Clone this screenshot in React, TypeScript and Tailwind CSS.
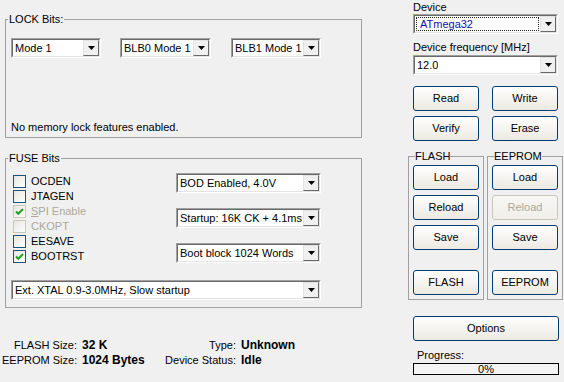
import React from "react";

const font = "font-['Liberation_Sans',Arial,sans-serif] text-[11px] leading-[13px] text-black";

const Arrow = () => (
  <svg width="7" height="4" viewBox="0 0 7 4">
    <path d="M0 0h7L3.5 4z" fill="#000" />
  </svg>
);

const Select = ({
  text,
  className,
  focused,
}: {
  text: string;
  className?: string;
  focused?: boolean;
}) => (
  <div
    className={`h-[20px] border border-t-[#a0a0a0] border-l-[#a0a0a0] border-b-white border-r-white ${className ?? ""}`}
  >
    <div className="h-full flex border border-t-[#696969] border-l-[#696969] border-b-[#e3e3e3] border-r-[#e3e3e3] bg-white">
      <div className="flex-1 flex items-center p-[1px] min-w-0">
        {focused ? (
          <div className="h-full w-full flex items-center pl-[3px] border border-dotted border-[#222] text-[#0e0ea8] whitespace-nowrap">
            {text}
          </div>
        ) : (
          <div className="pl-[1px] whitespace-nowrap overflow-hidden">{text}</div>
        )}
      </div>
      <div className="w-[16px] flex items-center justify-center bg-[#f0f0f0] border border-t-[#e3e3e3] border-l-[#e3e3e3] border-b-[#696969] border-r-[#696969]">
        <Arrow />
      </div>
    </div>
  </div>
);

const Button = ({
  label,
  className,
  disabled,
}: {
  label: string;
  className?: string;
  disabled?: boolean;
}) => (
  <div
    className={`h-[25px] w-[66px] rounded-[3px] border flex items-center justify-center bg-gradient-to-b ${
      disabled
        ? "border-[#c9c7ba] from-[#f7f6f3] to-[#f0efea] text-[#aca899]"
        : "border-[#003c74] from-white to-[#ece9e2]"
    } ${className ?? ""}`}
  >
    {label}
  </div>
);

const Check = ({
  label,
  checked,
  disabled,
  underline,
}: {
  label: string;
  checked?: boolean;
  disabled?: boolean;
  underline?: boolean;
}) => (
  <div className="h-[15px] flex items-start">
    <div
      className={`w-[13px] h-[13px] border flex items-center justify-center bg-gradient-to-br from-[#e5e5e0] to-white ${
        disabled ? "border-[#cac8bb]" : "border-[#1c5180]"
      }`}
    >
      {checked && (
        <svg width="9" height="9" viewBox="0 0 9 9">
          <path d="M1 4.5l2.3 2.3L8 2" stroke="#21a121" strokeWidth="2" fill="none" />
        </svg>
      )}
    </div>
    <span className={`ml-[5px] whitespace-nowrap ${disabled ? "text-[#aca899]" : ""}`}>
      {underline ? (
        <>
          <span className="underline">{label[0]}</span>
          {label.slice(1)}
        </>
      ) : (
        label
      )}
    </span>
  </div>
);

const InfoRow = ({ label, value, w }: { label: string; value: string; w: string }) => (
  <div className="flex h-[15px] items-center whitespace-nowrap">
    <span className={`${w} text-right`}>{label}</span>
    <span className="ml-[5px] font-bold text-[12px]">{value}</span>
  </div>
);

export default function App() {
  return (
    <div className={`w-[564px] h-[382px] bg-[#f0f0f0] flex overflow-hidden ${font}`}>
      {/* left column */}
      <div className="ml-[5px] w-[357px] flex flex-col">
        <fieldset className="mt-[13px] h-[125px] border border-[#a0a0a0] px-[5px]">
          <legend className="ml-[-3px] px-[1px]">LOCK Bits:</legend>
          <div className="mt-[12px] flex">
            <Select text="Mode 1" className="w-[90px]" />
            <Select text="BLB0 Mode 1" className="w-[91px] ml-[19px]" />
            <Select text="BLB1 Mode 1" className="w-[90px] ml-[20px]" />
          </div>
          <div className="mt-[63px]">No memory lock features enabled.</div>
        </fieldset>

        <fieldset className="mt-[14px] h-[156px] border border-[#a0a0a0] px-[5px]">
          <legend className="ml-[-3px] px-[1px]">FUSE Bits</legend>
          <div className="flex">
            <div className="w-[165px] pl-[2px] mt-[10px] flex flex-col">
              <Check label="OCDEN" />
              <Check label="JTAGEN" />
              <Check label="SPI Enable" checked disabled underline />
              <Check label="CKOPT" disabled />
              <Check label="EESAVE" />
              <Check label="BOOTRST" checked />
            </div>
            <div className="mt-[8px] flex flex-col gap-[15px]">
              <Select text="BOD Enabled, 4.0V" className="w-[145px]" />
              <Select text="Startup: 16K CK + 4.1ms" className="w-[145px]" />
              <Select text="Boot block 1024 Words" className="w-[145px]" />
            </div>
          </div>
          <Select text="Ext. XTAL 0.9-3.0MHz, Slow startup" className="w-[310px] mt-[15px]" />
        </fieldset>

        <div className="mt-[30px] flex">
          <div className="ml-[-3px] w-[155px] flex flex-col">
            <InfoRow label="FLASH Size:" value="32 K" w="w-[75px]" />
            <InfoRow label="EEPROM Size:" value="1024 Bytes" w="w-[75px]" />
          </div>
          <div className="flex flex-col">
            <InfoRow label="Type:" value="Unknown" w="w-[79px]" />
            <InfoRow label="Device Status:" value="Idle" w="w-[79px]" />
          </div>
        </div>
      </div>

      {/* right column */}
      <div className="ml-[46px] w-[155px] flex flex-col">
        <div className="ml-[5px] w-[145px] flex flex-col">
          <div className="mt-[1px] h-[13px]">Device</div>
          <Select text="ATmega32" className="w-[145px]" focused />
          <div className="mt-[7px] h-[13px]">Device frequency [MHz]</div>
          <Select text="12.0" className="w-[145px] mt-[1px]" />
          <div className="mt-[11px] flex justify-between">
            <Button label="Read" />
            <Button label="Write" />
          </div>
          <div className="mt-[5px] flex justify-between">
            <Button label="Verify" />
            <Button label="Erase" />
          </div>
        </div>

        <div className="mt-[9px] flex justify-between">
          <fieldset className="w-[76px] h-[150px] border border-[#a0a0a0] px-[4px]">
            <legend className="ml-[2px]">FLASH</legend>
            <div className="flex flex-col gap-[5px] mt-[2px]">
              <Button label="Load" />
              <Button label="Reload" />
              <Button label="Save" />
              <Button label="FLASH" className="mt-[15px]" />
            </div>
          </fieldset>
          <fieldset className="w-[76px] h-[150px] border border-[#a0a0a0] px-[4px]">
            <legend className="ml-[2px]">EEPROM</legend>
            <div className="flex flex-col gap-[5px] mt-[2px]">
              <Button label="Load" />
              <Button label="Reload" disabled />
              <Button label="Save" />
              <Button label="EEPROM" className="mt-[15px]" />
            </div>
          </fieldset>
        </div>

        <div className="ml-[5px] w-[146px] flex flex-col">
          <Button label="Options" className="w-[146px] mt-[16px]" />
          <div className="mt-[8px] pl-[4px] h-[13px]">Progress:</div>
          <div className="mt-[1px] h-[12px] border border-black bg-[#f4f4f4] flex items-center justify-center leading-[10px]">
            0%
          </div>
        </div>
      </div>
    </div>
  );
}
